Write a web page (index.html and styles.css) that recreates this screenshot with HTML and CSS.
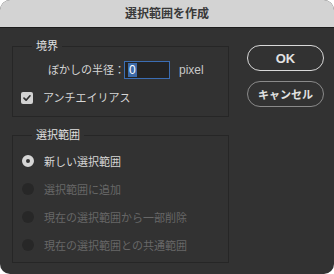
FILE: index.html
```html
<!DOCTYPE html>
<html lang="ja">
<head>
  <meta charset="UTF-8">
  <title>選択範囲を作成</title>
  <link rel="stylesheet" href="styles.css">
</head>
<body>
  <div class="window">
    <div class="titlebar">選択範囲を作成</div>

    <div class="content">
      <div class="groups">
        <!-- 境界 -->
        <fieldset class="group group-edge">
          <legend>境界</legend>
          <div class="feather-row">
            <span class="label">ぼかしの半径：</span>
            <span class="field"><span class="sel">0</span></span>
            <span class="unit">pixel</span>
          </div>
          <div class="check-row">
            <span class="checkbox">
              <svg width="12" height="12" viewBox="0 0 12 12"><path d="M3 6.2 L5.1 8.2 L9 3.8" fill="none" stroke="#2e2e2e" stroke-width="1.7" stroke-linecap="round" stroke-linejoin="round"/></svg>
            </span>
            アンチエイリアス
          </div>
        </fieldset>

        <!-- 選択範囲 -->
        <fieldset class="group group-mode">
          <legend>選択範囲</legend>
          <div class="radio-row"><span class="radio checked"></span>新しい選択範囲</div>
          <div class="radio-row disabled"><span class="radio"></span>選択範囲に追加</div>
          <div class="radio-row disabled"><span class="radio"></span>現在の選択範囲から一部削除</div>
          <div class="radio-row disabled"><span class="radio"></span>現在の選択範囲との共通範囲</div>
        </fieldset>
      </div>

      <div class="buttons">
        <button class="btn btn-default">OK</button>
        <button class="btn">キャンセル</button>
      </div>
    </div>
  </div>
</body>
</html>
```

FILE: styles.css
```css
/* ベース */
html {
  background: #ffffff;
}

body {
  margin: 0;
  font-family: "Liberation Sans", "Noto Sans CJK JP", sans-serif;
  font-size: 11px;
  color: #d6d6d6;
}

/* ダイアログ */
.window {
  width: 334px;
  height: 274px;
  background: #323232;
  border-radius: 10px;
  overflow: hidden;
  display: flex;
  flex-direction: column;
}

.titlebar {
  height: 27px;
  line-height: 28px;
  border-bottom: 1px solid #1c1c1c;
  background: #d3d3d3;
  color: #3a3a3a;
  font-size: 12px;
  font-weight: 700;
  text-align: center;
}

.content {
  display: flex;
  gap: 18px;
  padding: 10px 10px 11px 12px;
}

.groups {
  width: 217px;
  display: flex;
  flex-direction: column;
  gap: 10px;
}

/* グループ枠 */
.group {
  margin: 0;
  border: 1px solid #262626;
  padding: 0 8px 0 7px;
  min-width: 0;
}

.group legend {
  margin-left: 12px;
  padding: 0 4px;
  line-height: 16px;
  color: #e0e0e0;
}

.group-edge {
  padding-top: 7px;
  padding-bottom: 10px;
}

.group-mode {
  padding-top: 4px;
  padding-bottom: 3px;
}

/* ぼかし */
.feather-row {
  display: flex;
  align-items: center;
  height: 18px;
  padding-left: 28px;
}

.label {
  width: 76px;
  flex-shrink: 0;
  white-space: nowrap;
  line-height: 16px;
}

.field {
  width: 41px;
  height: 16px;
  flex-shrink: 0;
  border: 1px solid #3b6db3;
  background: #232323;
  display: flex;
  align-items: center;
  padding-left: 3px;
  box-sizing: content-box;
}

.sel {
  background: #3c6aa9;
  color: #ffffff;
  font-size: 12px;
  line-height: 14px;
  padding: 0 1px;
}

.unit {
  margin-left: 9px;
  font-size: 12px;
  color: #c8c8c8;
}

/* チェックボックス */
.check-row {
  display: flex;
  align-items: center;
  gap: 10px;
  margin-top: 11px;
  line-height: 16px;
  padding-left: 1px;
}

.checkbox {
  width: 12px;
  height: 12px;
  border-radius: 2px;
  background: #d2d2d2;
  display: flex;
}

/* ラジオ */
.radio-row {
  height: 28px;
  display: flex;
  align-items: center;
  gap: 10px;
  padding-left: 2px;
}

.radio {
  width: 12px;
  height: 12px;
  border-radius: 50%;
  background: #272727;
  box-sizing: border-box;
}

.radio.checked {
  border: 4px solid #d6d6d6;
  background: #333333;
}

.radio-row.disabled {
  color: #676767;
}

/* ボタン */
.buttons {
  width: 77px;
  display: flex;
  flex-direction: column;
  gap: 10px;
  padding-top: 7px;
}

.btn {
  height: 26px;
  border-radius: 13px;
  border: 1px solid #8a8a8a;
  background: transparent;
  color: #e2e2e2;
  font-family: inherit;
  font-size: 11px;
  font-weight: 700;
  padding: 0;
}

.btn-default {
  border-color: #d8d8d8;
  font-size: 13px;
}
```
